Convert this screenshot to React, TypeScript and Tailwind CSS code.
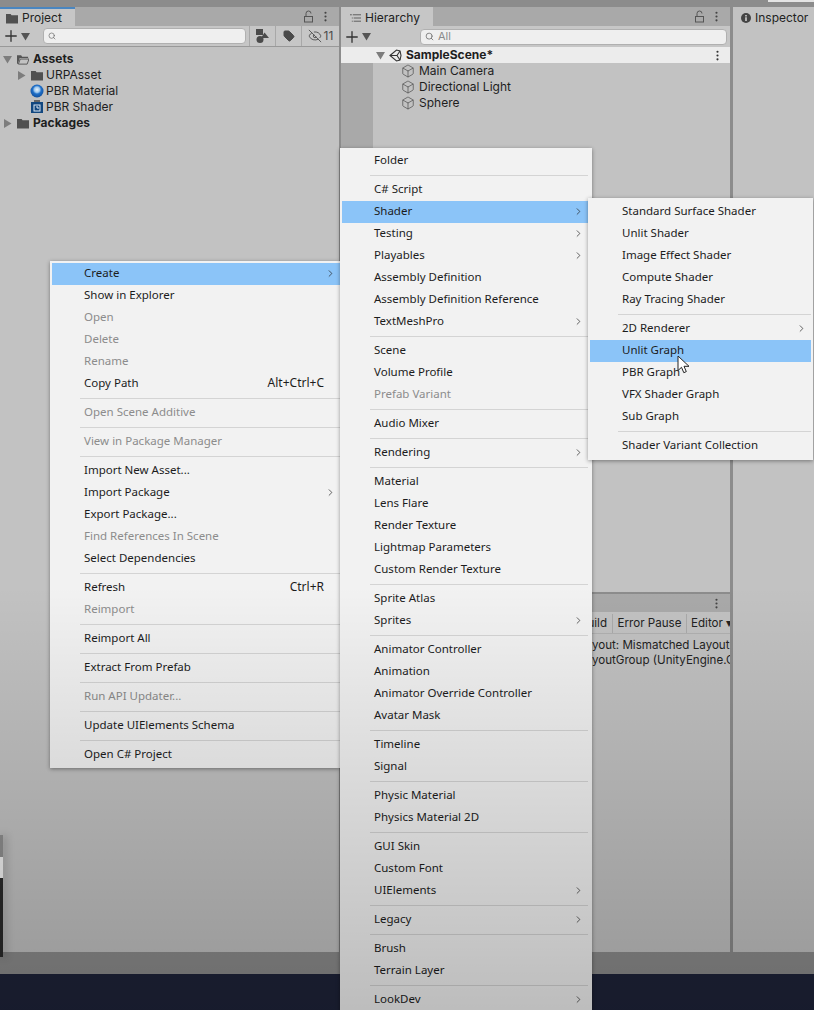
import { ChevronRight, EllipsisVertical, Plus, Search, Box, EyeOff, Tag } from "lucide-react";

type Item = { label: string; dim?: boolean; arrow?: boolean; keys?: string; on?: boolean } | "sep";

const createMenu: Item[] = [
  { label: "Create", arrow: true, on: true },
  { label: "Show in Explorer" },
  { label: "Open", dim: true },
  { label: "Delete", dim: true },
  { label: "Rename", dim: true },
  { label: "Copy Path", keys: "Alt+Ctrl+C" },
  "sep",
  { label: "Open Scene Additive", dim: true },
  "sep",
  { label: "View in Package Manager", dim: true },
  "sep",
  { label: "Import New Asset..." },
  { label: "Import Package", arrow: true },
  { label: "Export Package..." },
  { label: "Find References In Scene", dim: true },
  { label: "Select Dependencies" },
  "sep",
  { label: "Refresh", keys: "Ctrl+R" },
  { label: "Reimport", dim: true },
  "sep",
  { label: "Reimport All" },
  "sep",
  { label: "Extract From Prefab" },
  "sep",
  { label: "Run API Updater...", dim: true },
  "sep",
  { label: "Update UIElements Schema" },
  "sep",
  { label: "Open C# Project" },
];

const assetMenu: Item[] = [
  { label: "Folder" },
  "sep",
  { label: "C# Script" },
  { label: "Shader", arrow: true, on: true },
  { label: "Testing", arrow: true },
  { label: "Playables", arrow: true },
  { label: "Assembly Definition" },
  { label: "Assembly Definition Reference" },
  { label: "TextMeshPro", arrow: true },
  "sep",
  { label: "Scene" },
  { label: "Volume Profile" },
  { label: "Prefab Variant", dim: true },
  "sep",
  { label: "Audio Mixer" },
  "sep",
  { label: "Rendering", arrow: true },
  "sep",
  { label: "Material" },
  { label: "Lens Flare" },
  { label: "Render Texture" },
  { label: "Lightmap Parameters" },
  { label: "Custom Render Texture" },
  "sep",
  { label: "Sprite Atlas" },
  { label: "Sprites", arrow: true },
  "sep",
  { label: "Animator Controller" },
  { label: "Animation" },
  { label: "Animator Override Controller" },
  { label: "Avatar Mask" },
  "sep",
  { label: "Timeline" },
  { label: "Signal" },
  "sep",
  { label: "Physic Material" },
  { label: "Physics Material 2D" },
  "sep",
  { label: "GUI Skin" },
  { label: "Custom Font" },
  { label: "UIElements", arrow: true },
  "sep",
  { label: "Legacy", arrow: true },
  "sep",
  { label: "Brush" },
  { label: "Terrain Layer" },
  "sep",
  { label: "LookDev", arrow: true },
];

const shaderMenu: Item[] = [
  { label: "Standard Surface Shader" },
  { label: "Unlit Shader" },
  { label: "Image Effect Shader" },
  { label: "Compute Shader" },
  { label: "Ray Tracing Shader" },
  "sep",
  { label: "2D Renderer", arrow: true },
  { label: "Unlit Graph", on: true },
  { label: "PBR Graph" },
  { label: "VFX Shader Graph" },
  { label: "Sub Graph" },
  "sep",
  { label: "Shader Variant Collection" },
];

function MenuRows({ items }: { items: Item[] }) {
  return (
    <>
      {items.map((item, i) =>
        item === "sep" ? (
          <div key={i} className="flex h-[7px] items-center pl-[28px]">
            <div className="h-px w-full bg-[#d4d4d4]" />
          </div>
        ) : (
          <div
            key={i}
            className={`flex h-[22px] items-center pb-[2px] pl-[32px] pr-[16px] text-[11.5px] ${
              item.on ? "bg-[#8bc4f8]" : ""
            } ${item.dim ? "text-[#8c8c8c]" : "text-[#1c1c1c]"}`}
          >
            <span className="flex-1 whitespace-nowrap">{item.label}</span>
            {item.keys && <span className="text-[12px]">{item.keys}</span>}
            {item.arrow && <ChevronRight size={11} strokeWidth={1.5} className="-mr-[12px] text-[#222]" />}
          </div>
        ),
      )}
    </>
  );
}

function LockIcon() {
  return (
    <svg width="11" height="13" viewBox="0 0 11 13" fill="none" stroke="#555" strokeWidth="1">
      <rect x="1.5" y="6.5" width="8" height="5.5" />
      <path d="M3 6.5V3.5a2.5 2.5 0 0 1 5 0" />
    </svg>
  );
}

function Kebab({ className = "text-[#444]" }: { className?: string }) {
  return <EllipsisVertical size={13} strokeWidth={2} className={className} />;
}

function Triangle({ open, grey = "#7d7d7d" }: { open?: boolean; grey?: string }) {
  return (
    <svg width="9" height="9" viewBox="0 0 9 9" className="shrink-0">
      <path d={open ? "M0 1h9L4.5 8.5z" : "M1 0v9l7.5-4.5z"} fill={grey} />
    </svg>
  );
}

function FolderIcon({ open }: { open?: boolean }) {
  return open ? (
    <svg width="12" height="11" viewBox="0 0 13 11" className="shrink-0">
      <path d="M0 1h4.500l1 1.500H12V4H3L1 10H0z" fill="#555" />
      <path d="M3.500 5H13l-2 5.500H1.500z" fill="none" stroke="#555" strokeWidth="1" />
    </svg>
  ) : (
    <svg width="12" height="11" viewBox="0 0 13 11" className="shrink-0">
      <path d="M0 .5h5l1 1.500h7v9H0z" fill="#505050" />
    </svg>
  );
}

function SphereIcon() {
  return (
    <svg width="14" height="14" viewBox="0 0 14 14" className="shrink-0">
      <defs>
        <radialGradient id="ball" cx="50%" cy="40%" r="60%">
          <stop offset="0%" stopColor="#e8f2fb" />
          <stop offset="35%" stopColor="#9cc6ec" />
          <stop offset="55%" stopColor="#1f6fc8" />
          <stop offset="100%" stopColor="#114f9c" />
        </radialGradient>
      </defs>
      <circle cx="7" cy="7" r="6.500" fill="url(#ball)" />
    </svg>
  );
}

function ShaderIcon() {
  return (
    <svg width="12" height="14" viewBox="0 0 12 14" className="shrink-0">
      <rect x="3" y="0" width="6" height="2" fill="#666" />
      <rect x="0" y="2" width="12" height="11" fill="#12477f" />
      <rect x="3" y="5" width="6" height="6" fill="none" stroke="#dce8f4" strokeWidth="1" />
      <path d="M5 7h2v2" fill="none" stroke="#dce8f4" strokeWidth="1" />
    </svg>
  );
}

function SceneIcon() {
  return (
    <svg width="13" height="13" viewBox="0 0 13 13" fill="none" stroke="#333" strokeWidth="1.100" className="shrink-0">
      <path d="M1 6.500 7.500 1l3.500 1 1 4.500-1 4.500-3.500 1z" />
      <path d="M1 6.500h7L11 2M8 6.500 11 11" />
    </svg>
  );
}

function ListIcon() {
  return (
    <svg width="11" height="10" viewBox="0 0 12 10" fill="none" stroke="#555" strokeWidth="1">
      <path d="M0 1.500h2M3 1.500h9M2 5h1M4 5h8M2 8.500h1M4 8.500h8" />
    </svg>
  );
}

function ShapesIcon() {
  return (
    <svg width="13" height="14" viewBox="0 0 13 14" fill="#4a4a4a">
      <rect x="0" y="0" width="7" height="6" />
      <path d="M8.500 3.500 13 9H5z" />
      <circle cx="4" cy="10.500" r="3.500" />
    </svg>
  );
}

function CursorIcon() {
  return (
    <svg width="13" height="20" viewBox="0 0 13 20">
      <path d="M1 1v14.500l3.500-3.200 2.300 5.400 2.500-1.100-2.300-5.300H12z" fill="#fff" stroke="#222" strokeWidth="1" />
    </svg>
  );
}

function TreeRow({ label, bold, pad, icon, arrow }: { label: string; bold?: boolean; pad: string; icon: React.ReactNode; arrow?: React.ReactNode }) {
  return (
    <div className={`flex h-[16px] items-center text-[12px] text-[#1e1e1e] ${pad} ${bold ? "font-bold" : ""}`}>
      <span className="flex w-[13px] shrink-0">{arrow}</span>
      <span className="flex w-[14px] shrink-0 justify-center">{icon}</span>
      <span className={`whitespace-nowrap ${bold ? "ml-[3px]" : "ml-[2px]"}`}>{label}</span>
    </div>
  );
}

function AddButton({ width, pad }: { width: string; pad: string }) {
  return (
    <div className={`flex items-center gap-[1px] ${width} ${pad}`}>
      <Plus size={18} strokeWidth={1.75} className="text-[#333]" />
      <Triangle open grey="#555" />
    </div>
  );
}

export default function App() {
  return (
    <div className="relative flex h-[1010px] w-[814px] flex-col overflow-hidden bg-[#8c8c8c] font-['Inter',sans-serif]">
      <div className="flex h-[7px] justify-end">
        <div className="h-[2px] w-[46px] bg-[#e4e4e4]" />
      </div>

      <div className="flex h-[945px] shrink-0">
        {/* project */}
        <section className="flex w-[339px] flex-col bg-[#c2c2c2]">
          <div className="flex h-[19px] items-center bg-[#a9a9a9]">
            <div className="flex h-full w-[75px] items-center gap-[4px] border-t-2 border-[#4a86c0] bg-[#c6c6c6] pl-[6px] pt-[1px] text-[12px] text-[#222]">
              <FolderIcon />
              Project
            </div>
            <div className="ml-auto flex items-center gap-[5px] pr-[7px]">
              <LockIcon />
              <Kebab />
            </div>
          </div>
          <div className="flex h-[21px] items-center border-b border-[#999] bg-[#c6c6c6]">
            <AddButton width="w-[43px]" pad="pl-[2px]" />
            <div className="flex h-[16px] w-[203px] items-center rounded-[4px] border border-[#b0b0b0] bg-[#efefef] pl-[4px]">
              <Search size={8} strokeWidth={2} className="text-[#666]" />
            </div>
            <div className="ml-[3px] flex h-full flex-1 text-[#4a4a4a]">
              <span className="flex w-[26px] items-center justify-center border-l border-[#a8a8a8]"><ShapesIcon /></span>
              <span className="flex w-[26px] items-center justify-center border-l border-[#a8a8a8]"><Tag size={12} fill="#4a4a4a" /></span>
              <span className="flex flex-1 items-center justify-center gap-[2px] border-l border-[#a8a8a8] text-[12px]">
                <EyeOff size={14} strokeWidth={1.500} />11
              </span>
            </div>
          </div>
          <div className="pt-[4px]">
            <TreeRow label="Assets" bold pad="pl-[3px]" icon={<FolderIcon open />} arrow={<Triangle open />} />
            <TreeRow label="URPAsset" pad="pl-[17px]" icon={<FolderIcon />} arrow={<Triangle />} />
            <TreeRow label="PBR Material" pad="pl-[17px]" icon={<SphereIcon />} />
            <TreeRow label="PBR Shader" pad="pl-[17px]" icon={<ShaderIcon />} />
            <TreeRow label="Packages" bold pad="pl-[3px]" icon={<FolderIcon />} arrow={<Triangle />} />
          </div>
        </section>

        {/* hierarchy and console */}
        <section className="ml-[2px] flex w-[389px] flex-col">
          <div className="flex h-[585px] flex-col bg-[#c2c2c2]">
            <div className="flex h-[19px] items-center bg-[#a9a9a9]">
              <div className="flex h-full w-[92px] items-center gap-[4px] bg-[#c6c6c6] pl-[9px] pt-[3px] text-[12px] text-[#222]">
                <ListIcon />
                Hierarchy
              </div>
              <div className="ml-auto flex items-center gap-[5px] pr-[7px]">
                <LockIcon />
                <Kebab />
              </div>
            </div>
            <div className="flex h-[21px] items-center bg-[#c6c6c6]">
              <AddButton width="w-[79px]" pad="pl-[2px]" />
              <div className="flex h-[16px] w-[307px] items-center gap-[4px] rounded-[4px] border border-[#b0b0b0] bg-[#efefef] pl-[4px] text-[11px] text-[#8a8a8a]">
                <Search size={9} strokeWidth={2} className="text-[#666]" />
                All
              </div>
            </div>
            <div className="flex h-[16px] items-center bg-[#ececec] pl-[35px] pr-[6px] text-[12px] font-bold text-[#1e1e1e]">
              <Triangle open />
              <span className="ml-[4px]"><SceneIcon /></span>
              <span className="ml-[4px]">SampleScene*</span>
              <Kebab className="ml-auto text-[#333]" />
            </div>
            <div className="flex-1 bg-[#a9a9a9] pl-[32px]">
              <div className="h-full bg-[#c2c2c2] pl-[28px] text-[12px] text-[#1e1e1e]">
                {["Main Camera", "Directional Light", "Sphere"].map((name) => (
                  <div key={name} className="flex h-[16px] items-center gap-[4px]">
                    <Box size={14} strokeWidth={1} className="text-[#333]" />
                    {name}
                  </div>
                ))}
              </div>
            </div>
          </div>
          <div className="mt-[2px] flex flex-1 flex-col overflow-hidden bg-[#c2c2c2]">
            <div className="flex h-[18px] items-center justify-end bg-[#a9a9a9] pr-[7px]">
              <Kebab />
            </div>
            <div className="flex h-[22px] justify-end border-b border-[#b0b0b0] pt-[2px] text-[11.6px] text-[#222]">
              <span className="flex items-center border-r border-[#aaa] pl-[4px] pr-[5px]">Build</span>
              <span className="flex w-[74px] items-center justify-center border-r border-[#aaa]">Error Pause</span>
              <span className="flex w-[43px] items-center whitespace-nowrap pl-[4px]">Editor ▾</span>
            </div>
            <div className="whitespace-nowrap pl-[238px] pt-[4px] text-[11.6px] leading-[15px] text-[#222]">
              <div>Layout: Mismatched LayoutGroup.Repaint</div>
              <div>LayoutGroup (UnityEngine.GUILayout)</div>
            </div>
          </div>
        </section>

        {/* inspector */}
        <section className="ml-[3px] flex flex-1 flex-col bg-[#c2c2c2]">
          <div className="flex h-[19px] items-center gap-[4px] pl-[8px] pt-[3px] text-[12px] text-[#222]">
            <svg width="10" height="10" viewBox="0 0 10 10">
              <circle cx="5" cy="5" r="5" fill="#444" />
              <path d="M4.200 2h1.600v1.400H4.200zM4.200 4.300h1.600V8H4.200z" fill="#d0d0d0" />
            </svg>
            Inspector
          </div>
        </section>
      </div>

      <div className="h-[22px] shrink-0 bg-[#8c8c8c]" />
      <div className="flex-1 bg-[#1e2339]" />

      {/* small window peeking in from the left */}
      <div className="absolute left-0 top-[835px] flex h-[122px] w-[3px] flex-col shadow-[2px_0_8px_rgba(0,0,0,0.35)]">
        <div className="h-[22px] bg-[#8e8e8e]" />
        <div className="h-[21px] bg-[#f0f0f0]" />
        <div className="flex-1 bg-[#2a2a2a]" />
      </div>

      {/* context menus */}
      <div className="absolute left-[50px] top-[261px] w-[290px] bg-[#f2f2f2] py-[2px] pl-[2px] font-['Noto_Sans',sans-serif] shadow-[0_1px_4px_rgba(0,0,0,0.4)]">
        <MenuRows items={createMenu} />
      </div>
      <div className="absolute left-[340px] top-[148px] w-[252px] bg-[#f2f2f2] py-[2px] pl-[2px] pr-[4px] font-['Noto_Sans',sans-serif] shadow-[0_1px_4px_rgba(0,0,0,0.4)]">
        <MenuRows items={assetMenu} />
      </div>
      <div className="absolute left-[588px] top-[198px] w-[225px] bg-[#f2f2f2] pb-[3px] pl-[2px] pr-[2px] pt-[3px] font-['Noto_Sans',sans-serif] shadow-[0_1px_4px_rgba(0,0,0,0.4)]">
        <MenuRows items={shaderMenu} />
      </div>

      <div className="absolute left-[677px] top-[355px]">
        <CursorIcon />
      </div>

      {/* the capture darkens toward the bottom */}
      <div className="pointer-events-none absolute inset-0 bg-linear-to-b from-transparent from-[58%] to-black/22" />
    </div>
  );
}
